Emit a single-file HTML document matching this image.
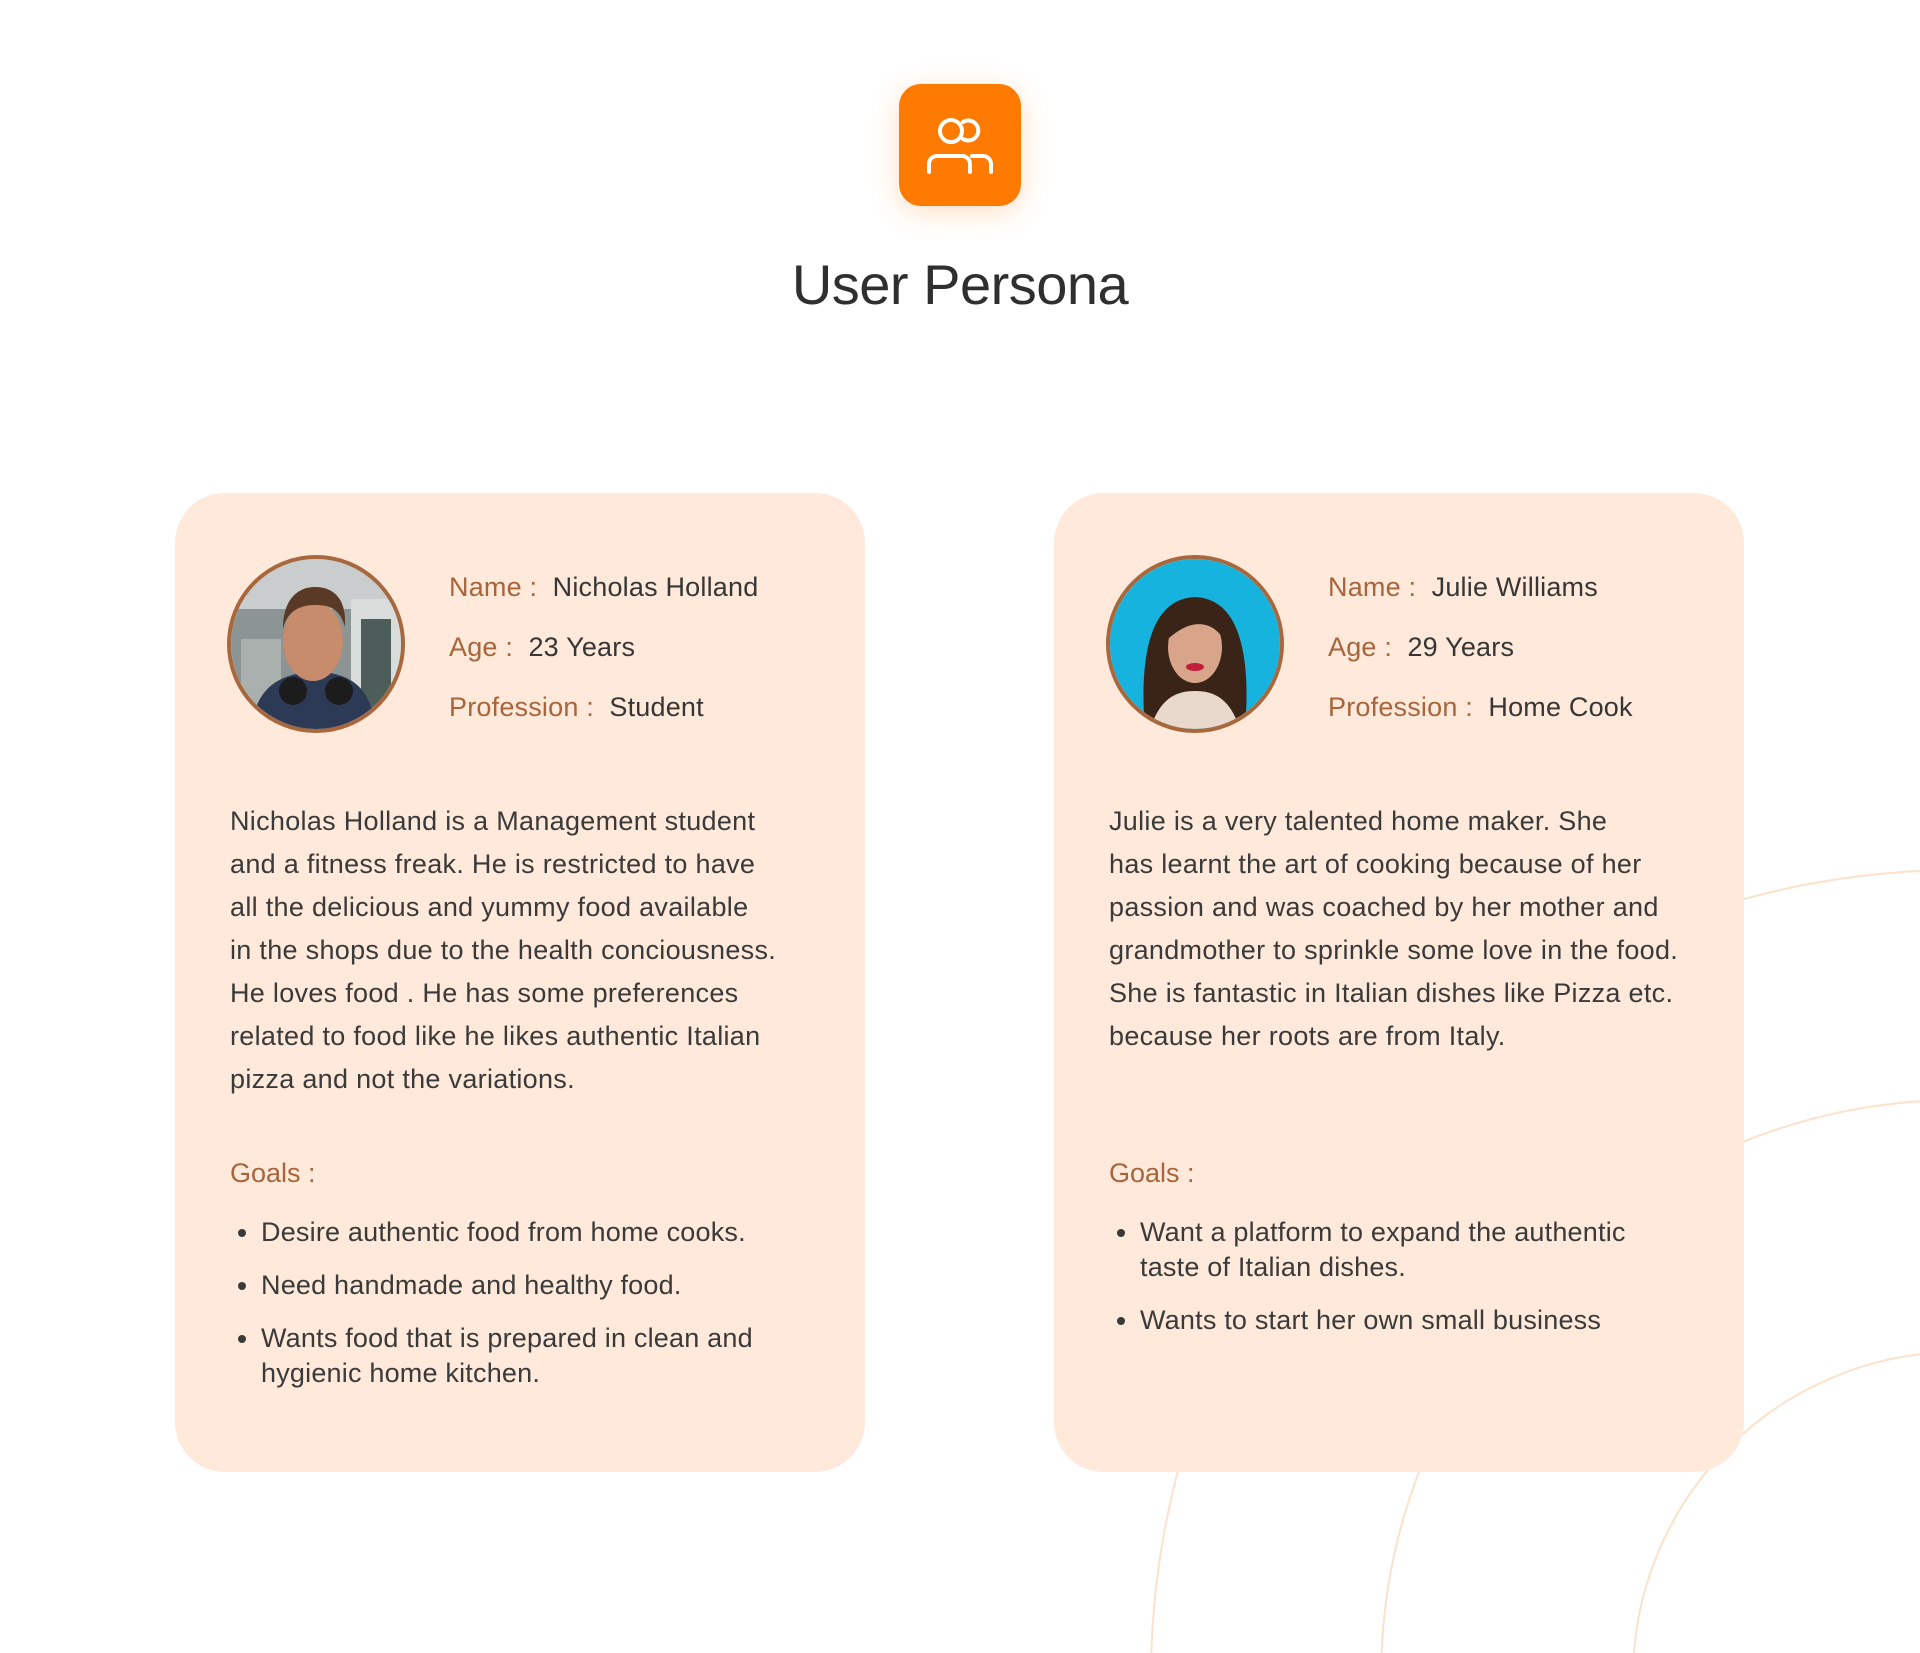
<!DOCTYPE html>
<html style="overflow:hidden"><head><meta charset="utf-8"><style>
*{margin:0;padding:0;box-sizing:border-box}
html,body{width:1920px;height:1653px;overflow:hidden}
body{background:#fff;position:relative;font-family:"Liberation Sans",sans-serif;color:#363636}
.icon{position:absolute;left:899px;top:84px;width:122px;height:122px;border-radius:22px;background:#ff7a00;box-shadow:0 6px 28px rgba(255,140,40,.28)}
h1{position:absolute;left:0;width:1920px;top:252px;text-align:center;font-size:56px;font-weight:normal;color:#2f2f2f;letter-spacing:-0.5px}
.card{position:absolute;top:493px;width:690px;height:979px;background:#fee9da;border-radius:50px}
.av{position:absolute;left:52px;top:62px;width:178px;height:178px;border-radius:50%;border:4px solid #a8673c;overflow:hidden}
.info{position:absolute;left:274px;top:64px;font-size:27px;line-height:60px;letter-spacing:0.2px}
.lab{color:#a8643a}
.p{position:absolute;left:55px;top:307px;white-space:nowrap;font-size:27px;line-height:43px;color:#3a3a3a;letter-spacing:0.3px}
.g{position:absolute;left:55px;top:665px;font-size:27px;color:#a8643a}
ul{position:absolute;left:86px;top:722px;width:560px;font-size:27px;line-height:35px;color:#3a3a3a;letter-spacing:0.2px}
li{margin-bottom:18px;padding-left:0}
</style></head><body>
<svg style="position:absolute;left:0;top:0;overflow:hidden;display:block" width="1920" height="1653" viewBox="0 0 1920 1653"><g fill="none" stroke="#fbe2cb" stroke-width="2"><circle cx="1959" cy="1678" r="808"/><circle cx="1959" cy="1678" r="578"/><circle cx="1959" cy="1678" r="326"/></g></svg>
<div class="icon"><svg width="122" height="122" viewBox="0 0 122 122"><g fill="none" stroke="#fff" stroke-width="4" stroke-linecap="round"><circle cx="52" cy="47" r="11"/><path d="M64 38a10 10 0 1 1 0 17"/><path d="M30 88V80a8 8 0 0 1 8-8h25a8 8 0 0 1 8 8v8"/><path d="M73 72h11a8 8 0 0 1 8 8v8"/></g></svg></div>
<h1>User Persona</h1>

<div class="card" style="left:175px">
<div class="av"><svg width="170" height="170" viewBox="0 0 170 170"><rect width="170" height="170" fill="#8d9594"/><rect x="0" y="0" width="170" height="50" fill="#c9cdcd"/><rect x="120" y="40" width="50" height="130" fill="#d8dcda"/><rect x="130" y="60" width="30" height="90" fill="#4d5e5a"/><rect x="10" y="80" width="40" height="80" fill="#a9b0ae"/><path d="M20 170c5-40 25-55 65-58 40 3 55 20 60 58z" fill="#2d3a55"/><ellipse cx="82" cy="82" rx="30" ry="40" fill="#c68c6c"/><path d="M52 70c0-30 15-42 32-42s32 10 30 40c-5-18-15-22-30-22s-28 6-32 24z" fill="#5a3a26"/><circle cx="62" cy="132" r="14" fill="#1c1c1c"/><circle cx="108" cy="132" r="14" fill="#1c1c1c"/></svg></div>
<div class="info"><div><span class="lab">Name :</span>&nbsp; Nicholas Holland</div><div><span class="lab">Age :</span>&nbsp; 23 Years</div><div><span class="lab">Profession :</span>&nbsp; Student</div></div>
<div class="p">Nicholas Holland is a Management student<br>and a fitness freak. He is restricted to have<br>all the delicious and yummy food available<br>in the shops due to the health conciousness.<br>He loves food . He has some preferences<br>related to food like he likes authentic Italian<br>pizza and not the variations.</div>
<div class="g">Goals :</div>
<ul><li>Desire authentic food from home cooks.</li><li>Need handmade and healthy food.</li><li>Wants food that is prepared in clean and<br>hygienic home kitchen.</li></ul>
</div>

<div class="card" style="left:1054px">
<div class="av"><svg width="170" height="170" viewBox="0 0 170 170"><rect width="170" height="170" fill="#17b3df"/><path d="M35 170c-5-60 0-130 50-132 50 2 55 72 50 132z" fill="#3a2418"/><path d="M40 170c10-30 25-38 45-38s35 8 45 38z" fill="#e9d9cc"/><ellipse cx="85" cy="88" rx="27" ry="36" fill="#d9a58a"/><path d="M58 80c0-25 12-38 30-36 18 2 26 15 24 34-10-15-30-20-54 2z" fill="#3a2418"/><ellipse cx="85" cy="108" rx="9" ry="4" fill="#c0203a"/></svg></div>
<div class="info"><div><span class="lab">Name :</span>&nbsp; Julie Williams</div><div><span class="lab">Age :</span>&nbsp; 29 Years</div><div><span class="lab">Profession :</span>&nbsp; Home Cook</div></div>
<div class="p">Julie is a very talented home maker. She<br>has learnt the art of cooking because of her<br>passion and was coached by her mother and<br>grandmother to sprinkle some love in the food.<br>She is fantastic in Italian dishes like Pizza etc.<br>because her roots are from Italy.</div>
<div class="g">Goals :</div>
<ul><li>Want a platform to expand the authentic<br>taste of Italian dishes.</li><li>Wants to start her own small business</li></ul>
</div>
</body></html>
